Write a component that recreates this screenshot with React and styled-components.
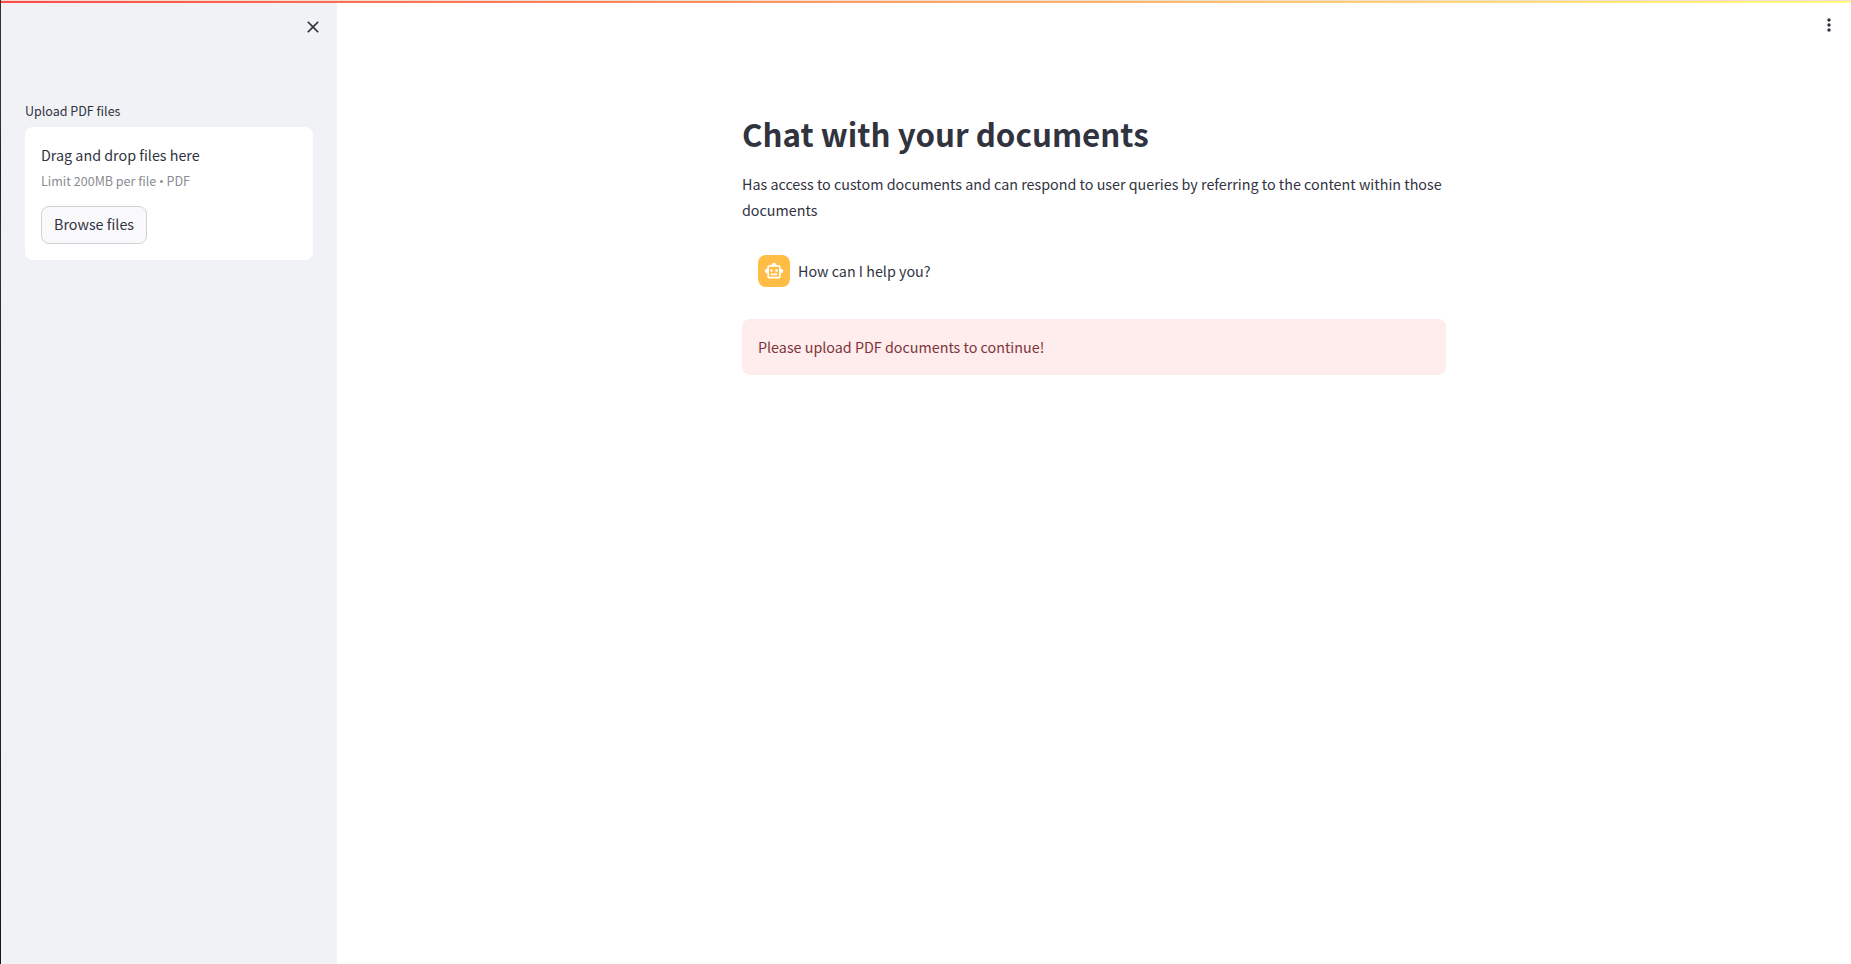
import React, { useRef } from "react";
import styled, { createGlobalStyle } from "styled-components";
import { MdClose, MdMoreVert, MdOutlineSmartToy } from "react-icons/md";

const GlobalStyle = createGlobalStyle`
  *, *::before, *::after { box-sizing: border-box; }
  body {
    margin: 0;
    background: #ffffff;
    color: #31333f;
    font-family: "Source Sans Pro", "Noto Sans CJK SC", sans-serif;
    font-size: 16px;
    /* x-height ratio of Source Sans, kept for the fallback family */
    font-size-adjust: 0.486;
    line-height: 26px;
  }
`;

const Page = styled.div`
  display: grid;
  grid-template-columns: 1px 336px 1fr;
  grid-template-rows: auto 1fr;
  min-height: 100vh;
`;

const WindowEdge = styled.div`
  grid-row: 1 / 3;
  background: linear-gradient(180deg, #35302f 0%, #35302f 12%, #172230 18%, #35302f 26%, #182430 45%, #22262a 70%, #0f1815 100%);
`;

const Decoration = styled.div`
  grid-column: 2 / 4;
  height: 3px;
  border-top: 1px solid #f0dfd0;
  background: linear-gradient(90deg, #ff4b4b, #fffd80);
`;

const Sidebar = styled.aside`
  background: #f0f2f6;
  padding: 12px 24px 24px;
`;

const Bar = styled.div`
  display: flex;
  justify-content: flex-end;
  height: ${({ $height }) => $height}px;
`;

const IconButton = styled.button`
  display: flex;
  align-items: center;
  justify-content: center;
  width: 24px;
  height: 24px;
  padding: 0;
  border: 0;
  background: transparent;
  color: #31333f;
  cursor: pointer;
  svg { width: 20px; height: 20px; }
`;

const CloseButton = styled(IconButton)`
  margin-right: -12px;
`;

const FieldLabel = styled.label`
  display: block;
  font-size: 14px;
  line-height: 24px;
  margin-bottom: 4px;
`;

const Dropzone = styled.section`
  padding: 16px;
  border-radius: 8px;
  background: #ffffff;
`;

const DropText = styled.div`
  line-height: 24px;
`;

const DropHint = styled.div`
  font-size: 14px;
  line-height: 28px;
  color: #8b8c93;
`;

const Bullet = styled.span`
  font-family: "Open Sans", sans-serif;
`;

const HiddenFile = styled.input`
  display: none;
`;

const BrowseButton = styled.button`
  display: block;
  height: 38px;
  margin-top: 11px;
  padding: 0 12px 2px;
  border: 1px solid #d2d3d8;
  border-radius: 8px;
  background: #f9f9fb;
  color: inherit;
  font: inherit;
  font-size-adjust: inherit;
  cursor: pointer;
`;

const Main = styled.main`
  padding: 10px 10px 24px;
`;

const Content = styled.div`
  max-width: 704px;
  margin: 0 auto;
`;

const Title = styled.h1`
  margin: 0 0 11px;
  font-size: 35px;
  font-weight: 700;
  line-height: 52px;
`;

const Intro = styled.p`
  margin: 0 0 16px;
`;

const Message = styled.div`
  display: flex;
  align-items: center;
  gap: 8px;
  padding: 16px;
`;

const Avatar = styled.div`
  display: flex;
  align-items: center;
  justify-content: center;
  width: 32px;
  height: 32px;
  border-radius: 8px;
  background: #ffbd45;
  color: #ffffff;
  svg { width: 20px; height: 20px; }
`;

const Alert = styled.div`
  margin-top: 16px;
  padding: 15px 16px;
  border-radius: 8px;
  background: #ffecec;
  color: #7d353b;
`;

export default function App() {
  const fileRef = useRef(null);
  return (
    <>
      <GlobalStyle />
      <Page>
        <WindowEdge />
        <Decoration />
        <Sidebar>
          <Bar $height={84}>
            <CloseButton type="button" aria-label="Close sidebar"><MdClose /></CloseButton>
          </Bar>
          <FieldLabel htmlFor="pdf-files">Upload PDF files</FieldLabel>
          <Dropzone>
            <DropText>Drag and drop files here</DropText>
            <DropHint>Limit 200MB per file <Bullet>•</Bullet> PDF</DropHint>
            <HiddenFile id="pdf-files" ref={fileRef} type="file" accept=".pdf" multiple />
            <BrowseButton type="button" onClick={() => fileRef.current.click()}>Browse files</BrowseButton>
          </Dropzone>
        </Sidebar>
        <Main>
          <Bar $height={95}>
            <IconButton type="button" aria-label="Main menu"><MdMoreVert /></IconButton>
          </Bar>
          <Content>
            <Title>Chat with your documents</Title>
            <Intro>
              Has access to custom documents and can respond to user queries by referring to the content within those
              documents
            </Intro>
            <Message>
              <Avatar><MdOutlineSmartToy /></Avatar>
              <span>How can I help you?</span>
            </Message>
            <Alert role="alert">Please upload PDF documents to continue!</Alert>
          </Content>
        </Main>
      </Page>
    </>
  );
}
